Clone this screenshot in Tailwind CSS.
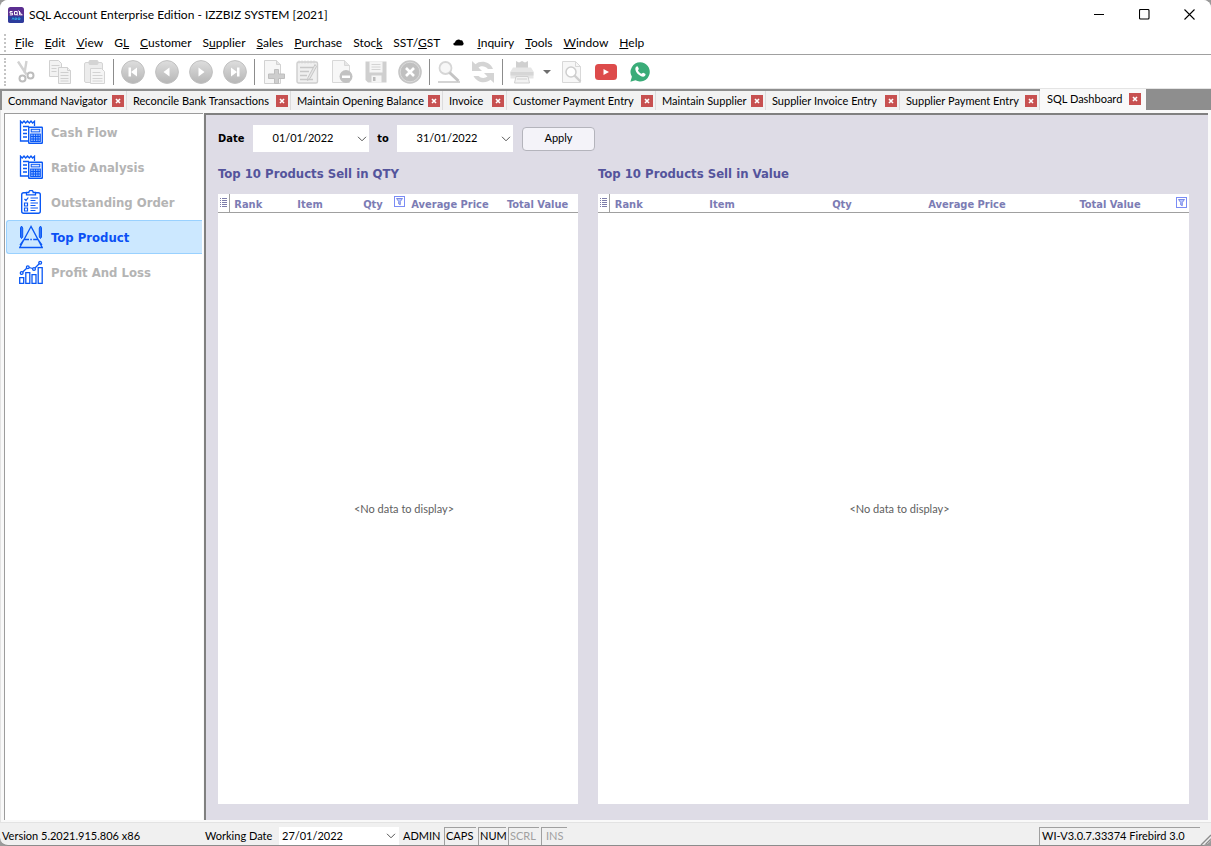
<!DOCTYPE html>
<html lang="en">
<head>
<meta charset="utf-8">
<title>SQL Account Enterprise Edition</title>
<script src="https://cdn.jsdelivr.net/npm/@tailwindcss/browser@4"></script>
</head>
<body class="h-screen bg-[#9a9a9a] font-['Lato',sans-serif] text-[11px] text-black">
<svg class="absolute size-0" aria-hidden="true">
  <defs>
    <linearGradient id="disc" x1="0" y1="0" x2="0" y2="1"><stop offset="0" stop-color="#dedede"/><stop offset="1" stop-color="#b6b6b6"/></linearGradient>
    <symbol id="close" viewBox="0 0 12 12"><rect width="12" height="12" fill="#c75050"/><path d="M4 4l4 4M8 4l-4 4" stroke="#fff" stroke-width="1.6"/></symbol>
    <symbol id="chev" viewBox="0 0 10 6"><path d="M1 .8l4 4 4-4" fill="none" stroke="#555" stroke-width="1"/></symbol>
    <symbol id="funnel" viewBox="0 0 11 11"><rect x=".5" y=".5" width="10" height="10" fill="#fff" stroke="#7b8cf5"/><path d="M2.5 2.5h6L6.3 5.5v3.2l-1.6-.8V5.5z" fill="#b8c6ff" stroke="#6274e0" stroke-width=".8"/></symbol>
    <symbol id="rows" viewBox="0 0 8 11"><path d="M0 .5h1M0 4.5h1M0 8.5h1M0 2.5h1M0 6.5h1M2 .5h5M2 2.5h5M2 4.5h5M2 6.5h5M2 8.5h5" stroke="#7c7caa"/></symbol>
    <symbol id="ledger" viewBox="0 0 24 24">
      <path d="M1.500 15V1.200L3.200 3 5 1l1.700 2 1.800-2 1.800 2L12 1l1.600 2 1.900-1.800V6M1.500 15v6H9M4 6.500h6M4 10h4M4 13.500h4M4 17h4" fill="none" stroke="#0a58f5" stroke-width="1.300"/>
      <rect x="9.700" y="7.200" width="13.600" height="16" rx=".5" fill="#fff" stroke="#0a58f5" stroke-width="1.400"/>
      <rect x="12.200" y="9.300" width="8.600" height="2.600" fill="#dbe7ff" stroke="#0a58f5"/>
      <path d="M11.700 14h9.600v7.500h-9.600zM11.700 16.500h9.600M11.700 19h9.600M14.200 14v7.500M16.600 14v7.500M19 14v7.500" fill="#9dbfff" stroke="#0a58f5" stroke-width="1.100"/>
    </symbol>
  </defs>
</svg>
<div class="flex h-full flex-col overflow-hidden rounded-lg border-b border-[#8c8c8c] bg-[#f0f0f0]">

  <header class="flex h-[29px] shrink-0 items-center bg-white pl-2 text-xs">
    <svg class="size-4" viewBox="0 0 16 16"><rect width="16" height="16" rx="2.500" fill="#5b2e91"/><path d="M0 9h16v4.500a2.500 2.500 0 0 1-2.500 2.500h-11A2.500 2.500 0 0 1 0 13.500z" fill="#2c3c9c"/><path d="M4.500 4.500H2v1.700h2.500v1.700H1.800M6.500 4.500h2.700v3.200H6.500zM8.500 7l1.400 1.500M11.500 4v3.800h3M10.500 3.500l3 4" fill="none" stroke="#fff"/><path d="M4 12.700l1-2 1 2M7 12.500h1.500v-1.500H7zM10 12.500h2v-1.500h-2z" fill="none" stroke="#32b5e8" stroke-width=".8"/></svg>
    <h1 class="ml-[5px] flex-1 whitespace-nowrap">SQL Account Enterprise Edition - IZZBIZ SYSTEM [2021]</h1>
    <button aria-label="Minimize" class="flex h-full w-[46px] items-center justify-center"><svg class="size-[11px]" viewBox="0 0 11 11"><path d="M0 5.500h10" stroke="#000"/></svg></button>
    <button aria-label="Maximize" class="flex h-full w-[45px] items-center justify-center"><svg class="size-[11px]" viewBox="0 0 11 11"><rect x=".5" y=".5" width="9.500" height="9.500" rx="1" fill="none" stroke="#000" stroke-width="1.100"/></svg></button>
    <button aria-label="Close" class="flex h-full w-11 items-center justify-center"><svg class="size-[11px]" viewBox="0 0 11 11"><path d="M.5.500l10 10M10.500.500l-10 10" stroke="#000" stroke-width="1.100"/></svg></button>
  </header>

  <nav aria-label="Menu" class="flex h-[26px] shrink-0 items-center gap-[11px] whitespace-nowrap border-b border-[#a0a0a0] bg-white pl-1 pt-0.5 text-xs">
    <span class="-mr-0.5 h-[18px] w-0 border-l-2 border-dotted border-[#c4c4c4]"></span>
    <button><u>F</u>ile</button><button><u>E</u>dit</button><button><u>V</u>iew</button><button>G<u>L</u></button><button><u>C</u>ustomer</button><button>S<u>u</u>pplier</button><button><u>S</u>ales</button><button><u>P</u>urchase</button><button>Stoc<u>k</u></button><button>SST/<u>G</u>ST</button>
    <button aria-label="Cloud" class="px-0.5"><svg class="h-[7px] w-[11px]" viewBox="0 0 11 7"><path d="M2 6.500C-.3 6.300 0 3.500 2 3.400 2.600.500 6.500 0 7.400 1.300c2-.6 2.600.7 2.400 1.700 1.500 1 .8 3.300-.8 3.500z"/></svg></button>
    <button><u>I</u>nquiry</button><button><u>T</u>ools</button><button><u>W</u>indow</button><button><u>H</u>elp</button>
  </nav>

  <div role="toolbar" class="flex h-[34px] shrink-0 items-center border-b border-[#e4e4e4] bg-white pl-1">
    <span class="mr-[3px] h-7 w-0.5 border-l-2 border-dotted border-[#c4c4c4]"></span>
    <button aria-label="Cut" class="flex w-[34px] justify-center"><svg class="size-6" viewBox="0 0 24 24" fill="none"><path d="M4 1.500l8.500 13M12.500 1l-2 12" stroke="#d2d2d2" stroke-width="2.400"/><circle cx="8.500" cy="18.500" r="3" stroke="#bdbdbd" stroke-width="2"/><circle cx="16.500" cy="15.500" r="3" stroke="#bdbdbd" stroke-width="2"/></svg></button>
    <button aria-label="Copy" class="flex w-[34px] justify-center"><svg class="size-6" viewBox="0 0 24 24" fill="#f2f2f2" stroke="#d0d0d0"><path d="M1.500.5h9l3 3v13h-12z"/><path d="M3.500 5.500h8M3.500 8.500h5M3.500 11.500h5"/><path d="M10.500 7.500h9l3 3v13h-12z"/><path d="M19.500 7.500v3h3M12.500 12.500h8M12.500 15.500h8M12.500 18.500h8M12.500 21h8"/></svg></button>
    <button aria-label="Paste" class="flex w-[34px] justify-center"><svg class="size-6" viewBox="0 0 24 24" fill="#ececec" stroke="#d4d4d4"><rect x="2.500" y="2.500" width="18" height="20" rx="1.500"/><rect x="7" y=".5" width="9" height="4" rx="1" fill="#d4d4d4"/><path d="M8.500 8.500h11l3 3v12h-14z" fill="#f5f5f5"/><path d="M10.500 12.500h8M10.500 15.500h10M10.500 18.500h10M10.500 21h10"/></svg></button>
    <span class="mx-0.5 h-[26px] w-px bg-[#8c8c8c]"></span>
    <button aria-label="First" class="flex w-[34px] justify-center"><svg class="size-6" viewBox="0 0 24 24"><circle cx="12" cy="12" r="11.400" fill="url(#disc)" stroke="#c0c0c0"/><path d="M7.500 7.500h2.500v9H7.500zM16 7.500v9L10 12z" fill="#fff"/></svg></button>
    <button aria-label="Previous" class="flex w-[34px] justify-center"><svg class="size-6" viewBox="0 0 24 24"><circle cx="12" cy="12" r="11.400" fill="url(#disc)" stroke="#c0c0c0"/><path d="M14.500 7.500v9L8.500 12z" fill="#fff"/></svg></button>
    <button aria-label="Next" class="flex w-[34px] justify-center"><svg class="size-6" viewBox="0 0 24 24"><circle cx="12" cy="12" r="11.400" fill="url(#disc)" stroke="#c0c0c0"/><path d="M9.500 7.500v9l6-4.500z" fill="#fff"/></svg></button>
    <button aria-label="Last" class="flex w-[34px] justify-center"><svg class="size-6" viewBox="0 0 24 24"><circle cx="12" cy="12" r="11.400" fill="url(#disc)" stroke="#c0c0c0"/><path d="M14 7.500h2.500v9h-2.500zM8 7.500v9l6-4.500z" fill="#fff"/></svg></button>
    <span class="mx-0.5 h-[26px] w-px bg-[#8c8c8c]"></span>
    <button aria-label="New" class="flex w-[34px] justify-center"><svg class="size-6" viewBox="0 0 24 24" stroke="#d2d2d2"><path d="M2.500.5h12l4 4v19h-16z" fill="#f6f6f6"/><path d="M14.500.5v4h4" fill="#e4e4e4"/><path d="M12.500 9.500h4v4.500h6v4.500h-6v5h-4v-5h-6v-4.500h6z" fill="#cecece" stroke="#bebebe"/></svg></button>
    <button aria-label="Edit" class="flex w-[34px] justify-center"><svg class="size-6" viewBox="0 0 24 24" fill="none"><rect x="1" y="2" width="20.500" height="21" rx="1.500" fill="#f0f0f0" stroke="#cecece" stroke-width="1.400"/><path d="M3 .5v3M6 .5v3M9 .5v3M12 .5v3M15 .5v3M18 .5v3" stroke="#d4d4d4"/><path d="M4 7.500h13M4 11.500h9M4 15.500h7M4 19.500h13" stroke="#c8c8c8" stroke-width="1.500"/><path d="M19 4.500l-7 13-.5 3 2.500-2 6.500-12z" fill="#e6e6e6" stroke="#c6c6c6"/></svg></button>
    <button aria-label="Delete" class="flex w-[34px] justify-center"><svg class="size-6" viewBox="0 0 24 24"><path d="M2.500.5h12l5 5v17h-17z" fill="#f7f7f7" stroke="#d8d8d8"/><path d="M14.500.5v5h5" fill="#e6e6e6" stroke="#d8d8d8"/><circle cx="16" cy="16.500" r="6.500" fill="#c2c2c2"/><path d="M12 15.500h8v2.500h-8z" fill="#fff"/></svg></button>
    <button aria-label="Save" class="flex w-[34px] justify-center"><svg class="size-6" viewBox="0 0 24 24"><path d="M1.500 1.500h21v21H4l-2.500-2.500z" fill="#cfcfcf"/><path d="M5.500 1.500h13v11h-13zM7.500 15.500h10v7h-10z" fill="#f5f5f5"/><path d="M7.500 4.500h9M7.500 7h9M7.500 9.500h9" stroke="#d4d4d4"/><path d="M9 17h2.500v4H9z" fill="#bcbcbc"/></svg></button>
    <button aria-label="Cancel" class="flex w-[34px] justify-center"><svg class="size-6" viewBox="0 0 24 24"><circle cx="12" cy="12" r="11.800" fill="#c6c6c6"/><circle cx="12" cy="12" r="9.800" fill="#c0c0c0" stroke="#dadada"/><path d="M8 8l8 8M16 8l-8 8" stroke="#fff" stroke-width="2.600"/></svg></button>
    <span class="mx-0.5 h-[26px] w-px bg-[#8c8c8c]"></span>
    <button aria-label="Find" class="flex w-[34px] justify-center"><svg class="size-6" viewBox="0 0 24 24" fill="none"><path d="M1 22h22" stroke="#d4d4d4" stroke-width="2"/><circle cx="8.500" cy="8" r="6" fill="#f7f7f7" stroke="#d6d6d6" stroke-width="1.800"/><path d="M12.500 12.500l9 8.500" stroke="#c4c4c4" stroke-width="3"/></svg></button>
    <button aria-label="Refresh" class="flex w-[34px] justify-center"><svg class="size-6" viewBox="0 0 24 24" fill="#d4d4d4"><path d="M1 1v10h10L7.500 7.500C10 5.500 14 5.500 17 9h5C19 1 9 0 4.500 4.200z"/><path d="M23 23V13H13l3.500 3.500C14 18.500 10 18.500 7.500 16h-5C6 23 15 24 19.500 19.800z"/></svg></button>
    <span class="mx-0.5 h-[26px] w-px bg-[#8c8c8c]"></span>
    <button aria-label="Print" class="flex w-[34px] justify-center"><svg class="size-6" viewBox="0 0 24 24"><path d="M6 1l3 1.500L12 1l3 1.500L18 1v8H6z" fill="#d0d0d0"/><path d="M3 7.500h18l2.500 4v7H.500v-7z" fill="#e6e6e6"/><path d="M.500 12h23v3.500H.500z" fill="#d6d6d6"/><path d="M6 16.500h12l1.500 6.500h-15z" fill="#f2f2f2" stroke="#d0d0d0"/><path d="M7 19h10" stroke="#d0d0d0"/></svg></button>
    <button aria-label="Print options" class="flex w-4 justify-center"><svg class="h-1 w-2" viewBox="0 0 8 4"><path d="M0 0h8L4 4z" fill="#6e6e6e"/></svg></button>
    <button aria-label="Preview" class="flex w-[34px] justify-center"><svg class="size-6" viewBox="0 0 24 24" fill="none"><path d="M2.500 1.500h13l5 5v16h-18z" fill="#f7f7f7" stroke="#d8d8d8"/><path d="M15.500 1.500v5h5" stroke="#d8d8d8"/><circle cx="11" cy="12" r="5" fill="#fff" stroke="#cecece" stroke-width="1.500"/><path d="M14.500 15.500l6 6" stroke="#cecece" stroke-width="2.400"/></svg></button>
    <button aria-label="YouTube" class="flex w-[34px] justify-center"><svg class="h-4 w-[22px]" viewBox="0 0 22 16"><rect width="22" height="16" rx="3.500" fill="#dd4b4b"/><path d="M8.500 5v6l5.500-3z" fill="#fff"/></svg></button>
    <button aria-label="WhatsApp" class="flex w-[34px] justify-center"><svg class="size-5" viewBox="0 0 20 20"><path d="M10.200.3a9.600 9.600 0 1 1-4.700 18L.4 19.700l1.500-4.900A9.600 9.600 0 0 1 10.200.3z" fill="#3aac78"/><path d="M6.200 4.800c.9-.9 1.500-.6 1.800.1l.8 1.800c.2.600-.9 1.300-.8 1.700.7 1.600 2 2.700 3.500 3.300.5.100 1.200-1.200 1.700-1l2 1c.7.400.3 1.800-.4 2.400-1.500 1.200-4.300.3-6.300-1.500C6 10.500 4.200 6.800 6.200 4.800z" fill="#fff"/></svg></button>
  </div>

  <div role="tablist" class="flex h-[21px] shrink-0 items-end whitespace-nowrap bg-[#8e8e8e] pl-0.5">
    <div class="flex h-[19px] w-[125px] items-center justify-between border-r border-[#dcdcdc] bg-[#f2f2f2] pl-1.5 pr-0.5"><button role="tab" class="pt-px">Command Navigator</button><button aria-label="Close tab"><svg class="size-3"><use href="#close"/></svg></button></div>
    <div class="flex h-[19px] w-[164px] items-center justify-between border-r border-[#dcdcdc] bg-[#f2f2f2] pl-1.5 pr-0.5"><button role="tab" class="pt-px">Reconcile Bank Transactions</button><button aria-label="Close tab"><svg class="size-3"><use href="#close"/></svg></button></div>
    <div class="flex h-[19px] w-[152px] items-center justify-between border-r border-[#dcdcdc] bg-[#f2f2f2] pl-1.5 pr-0.5"><button role="tab" class="pt-px">Maintain Opening Balance</button><button aria-label="Close tab"><svg class="size-3"><use href="#close"/></svg></button></div>
    <div class="flex h-[19px] w-16 items-center justify-between border-r border-[#dcdcdc] bg-[#f2f2f2] pl-1.5 pr-0.5"><button role="tab" class="pt-px">Invoice</button><button aria-label="Close tab"><svg class="size-3"><use href="#close"/></svg></button></div>
    <div class="flex h-[19px] w-[149px] items-center justify-between border-r border-[#dcdcdc] bg-[#f2f2f2] pl-1.5 pr-0.5"><button role="tab" class="pt-px">Customer Payment Entry</button><button aria-label="Close tab"><svg class="size-3"><use href="#close"/></svg></button></div>
    <div class="flex h-[19px] w-[110px] items-center justify-between border-r border-[#dcdcdc] bg-[#f2f2f2] pl-1.5 pr-0.5"><button role="tab" class="pt-px">Maintain Supplier</button><button aria-label="Close tab"><svg class="size-3"><use href="#close"/></svg></button></div>
    <div class="flex h-[19px] w-[134px] items-center justify-between border-r border-[#dcdcdc] bg-[#f2f2f2] pl-1.5 pr-0.5"><button role="tab" class="pt-px">Supplier Invoice Entry</button><button aria-label="Close tab"><svg class="size-3"><use href="#close"/></svg></button></div>
    <div class="flex h-[19px] w-[140px] items-center justify-between border-r border-[#dcdcdc] bg-[#f2f2f2] pl-1.5 pr-0.5"><button role="tab" class="pt-px">Supplier Payment Entry</button><button aria-label="Close tab"><svg class="size-3"><use href="#close"/></svg></button></div>
    <div class="flex h-[21px] w-[106px] items-center justify-between bg-[#f9f9f9] pb-px pl-[7px] pr-[5px]"><button role="tab" aria-selected="true" class="pt-px">SQL Dashboard</button><button aria-label="Close tab"><svg class="size-3"><use href="#close"/></svg></button></div>
  </div>

  <div class="flex min-h-0 flex-1 border-b border-l border-[#e3e3e3] bg-[#f9f9f9] pb-0.5 pl-[3px] pr-[3px] pt-[3px]">
    <aside class="w-[199px] shrink-0 border-l border-t border-[#9c9c9c] bg-white pl-px">
      <ul class="font-['DejaVu_Sans_Condensed','DejaVu_Sans',sans-serif] text-[13px] font-bold text-[#b4b4b4]">
        <li><button class="flex h-[35px] w-full items-center gap-2 border border-transparent pl-3"><svg class="size-6"><use href="#ledger"/></svg><span class="pt-0.5">Cash Flow</span></button></li>
        <li><button class="flex h-[35px] w-full items-center gap-2 border border-transparent pl-3"><svg class="size-6"><use href="#ledger"/></svg><span class="pt-0.5">Ratio Analysis</span></button></li>
        <li><button class="flex h-[35px] w-full items-center gap-2 border border-transparent pl-3"><svg class="size-6" viewBox="0 0 24 24" fill="none" stroke="#0a58f5"><rect x="2.700" y="2.700" width="18.600" height="20.600" rx="2" stroke-width="1.400"/><path d="M7.500 4.800V2.500h2.300a2.200 2.200 0 0 1 4.400 0h2.300v2.300z" fill="#fff" stroke-width="1.300"/><path d="M5.500 9l1.500 1.500 2.300-3M5.500 13v3h3v-3zM5.500 18v3h3v-3z" stroke-width="1.200"/><path d="M11.500 8h7.500M11.500 10.500h5M11.500 13h7.500M11.500 15.500h5M11.500 18h7.500M11.500 20.500h5"/></svg><span class="pt-0.5">Outstanding Order</span></button></li>
        <li class="pt-px"><button aria-current="page" class="flex h-[34px] w-[196px] items-center gap-2 rounded-l-[3px] border border-r-0 border-[#99d1ff] bg-[#cce8ff] pl-3 text-[#0a50f5]"><svg class="size-6" viewBox="0 0 24 24" fill="none" stroke="#0a58f5"><path d="M12 1.500L.8 22.500h22.400zM5 14.500h5M11.300 14.500h1.500M14.200 14.500h5M4.500 15L1 20M19.500 15l3.500 5" stroke-width="1.300"/><path d="M1.500 3L2.500 1l1.200 2V12l-1.200 1.500L1.500 12zM20.300 3l1.200-2 1 2V12l-1 1.500-1.200-1.500z" fill="#2f74f7"/></svg><span class="pt-0.5">Top Product</span></button></li>
        <li><button class="flex h-[35px] w-full items-center gap-2 border border-transparent pl-3"><svg class="size-6" viewBox="0 0 24 24" fill="none" stroke="#0a58f5" stroke-width="1.300"><path d="M.7 17.700h4v5.600h-4zM6.800 12.700h4v10.600h-4zM13 14.700h4v8.600h-4zM19.200 7.700h4v15.600h-4z"/><circle cx="2.700" cy="13" r="1.400"/><circle cx="8.800" cy="7.200" r="1.400"/><circle cx="15" cy="9" r="1.400"/><circle cx="21.200" cy="2.800" r="1.400"/><path d="M3.700 12l4-3.800M10.200 7.500l3.400 1M16 8l4.200-4.200"/></svg><span class="pt-0.5">Profit And Loss</span></button></li>
      </ul>
    </aside>

    <main class="ml-px flex min-w-0 flex-1 flex-col border-l-2 border-t-2 border-[#808080] bg-[#dedce6] pb-4 pl-3 pr-[19px] pt-2.5">
      <form class="flex h-[27px] items-center">
        <label for="from" class="w-[35px] pt-px font-['DejaVu_Sans_Condensed','DejaVu_Sans',sans-serif] font-bold">Date</label>
        <span class="flex h-full w-[116px] items-center bg-white pr-0.5"><input id="from" value="01/01/2022" class="w-full min-w-0 flex-1 pr-1 text-center outline-none"><button type="button" aria-label="Open calendar"><svg class="h-1.5 w-2.5"><use href="#chev"/></svg></button></span>
        <label for="until" class="w-7 pt-px text-center font-['DejaVu_Sans_Condensed','DejaVu_Sans',sans-serif] font-bold">to</label>
        <span class="flex h-full w-[116px] items-center bg-white pr-0.5"><input id="until" value="31/01/2022" class="w-full min-w-0 flex-1 pr-1 text-center outline-none"><button type="button" aria-label="Open calendar"><svg class="h-1.5 w-2.5"><use href="#chev"/></svg></button></span>
        <button type="button" class="ml-[9px] h-6 w-[73px] rounded border border-[#b4b4bc] bg-[#f4f3f9]">Apply</button>
      </form>

      <div class="mt-3 flex min-h-0 flex-1 gap-5">
        <section class="flex min-w-0 flex-[360] flex-col">
          <h2 class="h-[30px] font-['DejaVu_Sans_Condensed','DejaVu_Sans',sans-serif] text-[13px] leading-5 font-bold text-[#54549c]">Top 10 Products Sell in QTY</h2>
          <div class="flex flex-1 flex-col bg-white">
            <table class="w-full table-fixed font-['DejaVu_Sans_Condensed','DejaVu_Sans',sans-serif] text-[#7c7cb4]">
              <colgroup><col class="w-[11px]"><col class="w-[38px]"><col class="w-[86px]"><col class="w-10"><col class="w-[114px]"><col class="w-[71px]"></colgroup>
              <thead><tr class="h-[18px] border-b border-[#a0a0a0] whitespace-nowrap leading-[14px]">
                <th class="p-0 pl-0.5 pt-px" aria-label="Columns"><svg class="h-[11px] w-2"><use href="#rows"/></svg></th>
                <th class="border-l border-[#a0a0a0] pt-1">Rank</th><th class="pt-1">Item</th>
                <th class="relative pt-1">Qty<svg class="absolute -right-3 top-0.5 size-[11px]"><use href="#funnel"/></svg></th>
                <th class="pt-1">Average Price</th><th class="pr-[13px] pt-1">Total Value</th>
              </tr></thead>
            </table>
            <p class="flex flex-1 items-center justify-center pl-3 pt-px text-[#606060]">&lt;No data to display&gt;</p>
          </div>
        </section>
        <section class="flex min-w-0 flex-[591] flex-col">
          <h2 class="h-[30px] font-['DejaVu_Sans_Condensed','DejaVu_Sans',sans-serif] text-[13px] leading-5 font-bold text-[#54549c]">Top 10 Products Sell in Value</h2>
          <div class="flex flex-1 flex-col bg-white">
            <table class="w-full table-fixed font-['DejaVu_Sans_Condensed','DejaVu_Sans',sans-serif] text-[#7c7cb4]">
              <colgroup><col class="w-[11px]"><col class="w-[39px]"><col class="w-[148px]"><col class="w-[92px]"><col class="w-[158px]"><col class="w-32"><col class="w-[15px]"></colgroup>
              <thead><tr class="h-[18px] border-b border-[#a0a0a0] whitespace-nowrap leading-[14px]">
                <th class="p-0 pl-0.5 pt-px" aria-label="Columns"><svg class="h-[11px] w-2"><use href="#rows"/></svg></th>
                <th class="border-l border-[#a0a0a0] pt-1">Rank</th><th class="pt-1">Item</th><th class="pt-1">Qty</th><th class="pt-1">Average Price</th><th class="pt-1">Total Value</th>
                <th aria-label="Filter" class="pb-0.5 pl-0.5"><svg class="size-[11px]"><use href="#funnel"/></svg></th>
              </tr></thead>
            </table>
            <p class="flex flex-1 items-center justify-center pl-3 pt-px text-[#606060]">&lt;No data to display&gt;</p>
          </div>
        </section>
      </div>
    </main>
  </div>

  <footer class="flex h-[22px] shrink-0 items-center whitespace-nowrap pl-0.5 pt-1">
    <span class="w-[203px]">Version 5.2021.915.806 x86</span>
    <label for="workdate" class="w-[74px]">Working Date</label>
    <span class="flex h-[18px] w-[120px] items-center bg-white pr-[3px]"><input id="workdate" value="27/01/2022" class="w-full min-w-0 flex-1 pl-[3px] outline-none"><button aria-label="Open calendar"><svg class="h-1.5 w-2.5"><use href="#chev"/></svg></button></span>
    <span class="w-[45px] pl-1">ADMIN</span>
    <span class="h-[18px] w-8 border-l border-t border-[#a0a0a0] pl-px">CAPS</span>
    <span class="ml-0.5 h-[18px] w-7 border-l border-t border-[#a0a0a0] pl-px">NUM</span>
    <span class="ml-0.5 h-[18px] w-[31px] border-l border-t border-[#a0a0a0] pl-px text-[#a0a0a0]">SCRL</span>
    <span class="ml-0.5 h-[18px] w-[26px] border-l border-t border-[#a0a0a0] pl-1 text-[#a0a0a0]">INS</span>
    <span class="ml-auto h-[18px] w-[161px] border-l border-t border-[#a0a0a0] pl-0.5">WI-V3.0.7.33374 Firebird 3.0</span>
    <svg class="size-[11px] self-end" viewBox="0 0 11 11"><path d="M1 11L11 1M5 11l6-6M9 11l2-2" stroke="#8c8c8c" stroke-width="1.400"/></svg>
  </footer>
</div>
</body>
</html>
